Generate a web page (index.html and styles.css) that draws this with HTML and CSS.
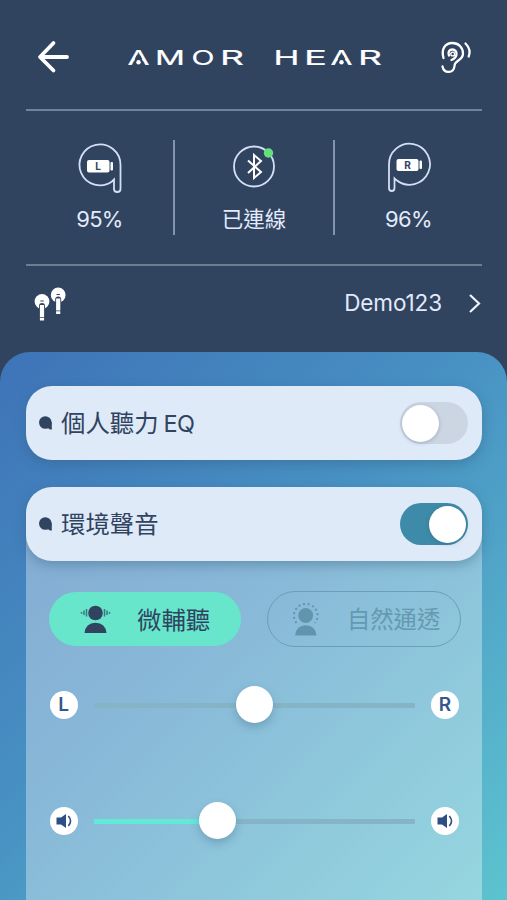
FILE: index.html
```html
<!DOCTYPE html>
<html lang="zh-Hant">
<head>
<meta charset="utf-8">
<title>AMOR HEAR</title>
<link rel="stylesheet" href="styles.css">
</head>
<body>
<main class="app">
  <header class="header">
    <svg class="back" width="34" height="34" viewBox="0 0 34 34"><path d="M17.500 3 4 17l13.500 13.500M5 17h26"/></svg>
    <svg class="brand" width="260" height="24" viewBox="0 0 260 24" role="img">
      <text class="brand-text" y="19.500"><tspan x="1.500" textLength="22" lengthAdjust="spacingAndGlyphs">A</tspan><tspan x="29" textLength="30" lengthAdjust="spacingAndGlyphs">M</tspan><tspan x="65.500" textLength="23" lengthAdjust="spacingAndGlyphs">O</tspan><tspan x="94" textLength="24" lengthAdjust="spacingAndGlyphs">R</tspan> <tspan x="147.500" textLength="26" lengthAdjust="spacingAndGlyphs">H</tspan><tspan x="178" textLength="23" lengthAdjust="spacingAndGlyphs">E</tspan><tspan x="204.500" textLength="22" lengthAdjust="spacingAndGlyphs">A</tspan><tspan x="232" textLength="24" lengthAdjust="spacingAndGlyphs">R</tspan></text>
      <g class="brand-gap"><path d="M6.500 20.500 10.500 10.500h4l4 10z"/><path d="M209.500 20.500 213.500 10.500h4l4 10z"/></g>
      <circle cx="12.500" cy="17.200" r="2.200"/><circle cx="215.500" cy="17.200" r="2.200"/>
    </svg>
    <svg class="ear" width="32" height="36" viewBox="0 0 32 36"><path d="M2.500 19C0 10 4 4 11.300 4 17.500 4 22 8.500 22 14.500c0 7.500-8 6-8.500 12.500-.5 7.500-10.500 8-12 .500"/><path d="M8 16.500c-1.500-3.500 .5-6 3.300-6s4.700 2.200 4.200 5-2.500 4.500-5 5.500"/><circle class="ear-core" cx="11.700" cy="15" r="1.900"/><path d="M24.500 4.500q6 6 3.200 13"/></svg>
  </header>

  <section class="status">
    <div class="cell">
      <svg width="46" height="50" viewBox="0 0 46 50"><path class="ring" d="M35 36.500A20.500 20.500 0 1 1 43.500 20v24c0 4-6.500 4-6.500 0v-9.500q-1 1-2 2"/><rect class="fill" x="10" y="15" width="22.500" height="12.500" rx="2"/><rect class="fill" x="33.500" y="17" width="2.500" height="8.500" rx="1"/><text class="side" x="21" y="25">L</text></svg>
      <span>95%</span>
    </div>
    <div class="cell cell-mid">
      <svg width="46" height="50" viewBox="0 0 46 50"><circle class="ring" cx="23" cy="21.500" r="20"/><path class="bt" d="m17 15.500 13 11.500-7 6V10l7 6-13 12"/><circle class="dot" cx="37.500" cy="8" r="4.700"/></svg>
      <span>已連線</span>
    </div>
    <div class="cell">
      <svg width="46" height="50" viewBox="0 0 46 50"><path class="ring" d="M11 35.500A20.500 20.500 0 1 0 3 20v23c0 4 5.500 4 5.500 0v-9.500q1 1 2.500 2"/><rect class="fill" x="10.500" y="14" width="22" height="12" rx="2"/><rect class="fill" x="33.500" y="15.500" width="2.500" height="8.500" rx="1"/><text class="side" x="21.500" y="23.800">R</text></svg>
      <span>96%</span>
    </div>
  </section>

  <section class="device">
    <svg width="34" height="36" viewBox="0 0 34 36"><g id="bud"><circle class="fill" cx="9" cy="15.500" r="7.400"/><path class="stem-edge" d="M6 34V20q0-3 3-3t3 3v14z"/><path class="fill" d="M6.900 31V19h4.200v12zM6.900 31.700h4.200v2.800H6.900z"/><path class="slot" d="M7.300 15h3.400"/></g><use href="#bud" x="16.200" y="-6.500"/></svg>
    <span class="device-name">Demo123</span>
    <svg class="chevron" width="14" height="22" viewBox="0 0 14 22"><path d="m2 2 9 8.500L2 19"/></svg>
  </section>

  <section class="panel">
    <div class="card">
      <svg class="bullet" width="13" height="14" viewBox="0 0 13 14"><circle cx="6.300" cy="6.500" r="6.300"/><path d="M8 6h4.800v7.500H11l-3-2z"/></svg>
      <span class="card-title">個人聽力<span class="latin">EQ</span></span>
      <i class="toggle"></i>
    </div>
    <div class="group">
      <div class="card">
        <svg class="bullet" width="13" height="14" viewBox="0 0 13 14"><circle cx="6.300" cy="6.500" r="6.300"/><path d="M8 6h4.800v7.500H11l-3-2z"/></svg>
        <span class="card-title">環境聲音</span>
        <i class="toggle toggle-on"></i>
      </div>
      <div class="modes">
        <div class="mode mode-active">
          <svg width="34" height="36" viewBox="0 0 34 36"><circle cx="17.500" cy="12" r="7.300"/><path d="M6.500 32q1-10 11-10.300Q27.500 22 28.500 32z"/><path class="waves" d="M8.500 8v7.500M6 9.500v4.500M3.500 11v1.800M26.500 8v7.500M29 9.500v4.500M31.500 11v1.800"/></svg>
          <span>微輔聽</span>
        </div>
        <div class="mode mode-outline">
          <svg width="34" height="36" viewBox="0 0 34 36"><circle cx="17.700" cy="14.500" r="7.400"/><path d="M7 34.500q1-10 10.700-10.300 10 .3 10.800 10.300z"/><path class="halo" d="M8.500 22A11.800 11.800 0 1 1 27 22"/></svg>
          <span>自然通透</span>
        </div>
      </div>
      <div class="slider">
        <b class="cap">L</b>
        <div class="track"><i class="knob knob-balance"></i></div>
        <b class="cap">R</b>
      </div>
      <div class="slider">
        <b class="cap"><svg width="28" height="28" viewBox="0 0 28 28"><path d="M6.500 10.500h4.500l5-3.500v14l-5-3.500H6.500z"/><path class="sound" d="M18.300 9q4.500 5 0 10"/></svg></b>
        <div class="track"><i class="level"></i><i class="knob knob-volume"></i></div>
        <b class="cap"><svg width="28" height="28" viewBox="0 0 28 28"><path d="M6.500 10.500h4.500l5-3.500v14l-5-3.500H6.500z"/><path class="sound" d="M18.300 9q4.500 5 0 10"/></svg></b>
      </div>
    </div>
  </section>
</main>
</body>
</html>
```
FILE: styles.css
```css
* { box-sizing: border-box; }
body { margin: 0; background: #30435f; font-family: Inter, "Noto Sans CJK TC", sans-serif; }
svg { display: block; flex: none; overflow: visible; }
.app { width: 507px; height: 900px; overflow: hidden; display: flex; flex-direction: column; }

.header { height: 111px; margin: 0 25px 0 26px; border-bottom: 2px solid #6f839e; display: flex; align-items: flex-start; padding: 40px 9px 0 10px; }
.back { fill: none; stroke: #fff; stroke-width: 3.8; stroke-linecap: round; stroke-linejoin: round; }
.brand { margin: 5px 0 0 56px; fill: #fff; }
.brand-text { font: 400 20.2px Inter, sans-serif; stroke: #fff; stroke-width: .2; }
.brand-gap { fill: #30435f; }
.ear { margin: -1px 0 0 auto; fill: none; stroke: #fff; stroke-width: 2.3; stroke-linecap: round; }
.ear-core { stroke-width: 1.4; }

.status { height: 155px; margin: 0 25px 0 26px; padding-top: 29px; border-bottom: 2px solid #698093; display: grid; grid-template-columns: 147px 162px 147px; }
.cell { height: 95px; display: flex; flex-direction: column; align-items: center; padding-top: 5px; color: #e2eafb; font-size: 22px; line-height: 28px; }
.cell span { margin-top: 10px; white-space: nowrap; letter-spacing: -.7px; }
.cell-mid { border: solid #8494ad; border-width: 0 2px; font-size: 21.5px; }
.cell-mid span { letter-spacing: 0; }
.ring { fill: none; stroke: #d3dff5; stroke-width: 1.8; }
.fill { fill: #fff; }
.side { font: 700 10px Inter, sans-serif; fill: #30435f; text-anchor: middle; }
.bt { fill: none; stroke: #fff; stroke-width: 2; }
.dot { fill: #62e17c; }

.device { height: 86px; margin: 0 25px 0 33px; padding-top: 20px; display: flex; align-items: flex-start; }
.stem-edge { fill: #30435f; }
.slot { stroke: #30435f; stroke-width: 1; }
.device-name { margin: 3px 26px 0 auto; color: #e2eafb; font-size: 22.5px; line-height: 28px; letter-spacing: -.1px; }
.chevron { margin-top: 7px; fill: none; stroke: #eef4ff; stroke-width: 2.2; }

.panel { flex: 1; padding: 34px 25px 0 26px; border-radius: 30px 30px 0 0; background: linear-gradient(135deg, #3e73b8 0%, #4892c3 46%, #5dc3cf 100%); display: flex; flex-direction: column; gap: 27px; }
.card { height: 74px; flex: none; border-radius: 26px; background: #dfeaf9; box-shadow: 0 4px 12px rgba(50, 90, 120, .4); display: flex; align-items: center; padding: 0 14px 0 13px; }
.bullet { fill: #30435f; margin-right: 9px; }
.card-title { color: #30435f; font-size: 24.4px; line-height: 34px; white-space: nowrap; }
.latin { font-size: 23.5px; margin-left: 5px; letter-spacing: -.8px; }
.toggle { margin-left: auto; width: 68px; height: 42px; border-radius: 21px; background: #ccd6e3; padding: 2.5px 2.500px 2.500px 1.500px; display: flex; }
.toggle::before { content: ""; width: 37px; height: 37px; border-radius: 50%; background: #fff; box-shadow: 0 1px 4px rgba(50, 70, 100, .3); }
.toggle-on { background: #3d8ba8; justify-content: flex-end; }

.group { flex: 1; display: flex; flex-direction: column; background: linear-gradient(rgba(255, 255, 255, 0) 36px, rgba(255, 255, 255, .35) 37px); }
.modes { display: flex; align-items: center; justify-content: space-between; margin: 30px 21px 0 23px; height: 56px; }
.mode { display: flex; align-items: center; border-radius: 28px; white-space: nowrap; }
.mode span { margin-top: -2px; }
.mode-active { width: 192px; height: 54px; padding-left: 29px; gap: 25px; background: #67e6cc; color: #30435f; fill: #30435f; font-size: 24.4px; }
.mode-outline { width: 194px; height: 56px; border: 1.5px solid #6c9eb5; padding-left: 20px; gap: 25px; color: #6599b0; fill: #6295ad; font-size: 23.3px; }
.waves { stroke: #3c7780; stroke-width: 1.5; }
.halo { fill: none; stroke: #6295ad; stroke-width: 2; stroke-dasharray: 2 2.7; }
.slider { display: flex; align-items: center; height: 37px; margin: 39px 23px 0 23.500px; gap: 16px; }
.slider + .slider { margin-top: 79px; }
.cap { width: 28px; height: 28px; flex: none; border-radius: 50%; background: #fff; color: #34578d; fill: #2e4f84; font-weight: 600; font-size: 19px; line-height: 28px; text-align: center; }
.sound { fill: none; stroke: #2e4f84; stroke-width: 1.6; }
.track { position: relative; flex: 1; height: 5px; margin-top: 2px; background: #86b4c7; border-radius: 1px; }
.level { display: block; width: 125px; height: 5px; background: #64e8d8; }
.knob { position: absolute; top: -17px; width: 37px; height: 37px; border-radius: 50%; background: #fff; box-shadow: 0 4px 9px rgba(60, 100, 130, .35); }
.knob-balance { left: 142px; }
.knob-volume { left: 105.500px; }
```
